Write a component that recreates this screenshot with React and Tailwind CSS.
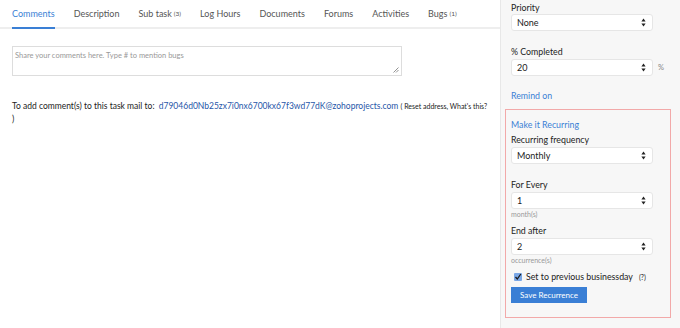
import React from "react";

const tabs = [
  { label: "Comments", active: true },
  { label: "Description" },
  { label: "Sub task", count: "(3)" },
  { label: "Log Hours" },
  { label: "Documents" },
  { label: "Forums" },
  { label: "Activities" },
  { label: "Bugs", count: "(1)" },
];

function Arrows() {
  return (
    <svg width="5" height="9" viewBox="0 0 5 9" className="shrink-0">
      <path d="M2.5 0.5 L4.6 3.5 H0.4 Z" fill="#222" />
      <path d="M2.5 8.5 L4.6 5.5 H0.4 Z" fill="#222" />
    </svg>
  );
}

function Select({ value }) {
  return (
    <div className="flex h-[17px] w-[142px] items-center justify-between rounded-[3px] border border-[#e6e6e6] bg-white pl-[5px] pr-[6px] text-[9px] text-[#222]">
      <span>{value}</span>
      <Arrows />
    </div>
  );
}

export default function App() {
  return (
    <div
      className="flex h-[328px] w-[680px] overflow-hidden bg-white"
      style={{ fontFamily: "Lato, 'Open Sans', sans-serif" }}
    >
      <div className="flex w-[500px] flex-col">
        <div className="flex h-[29px] items-stretch gap-[19px] whitespace-nowrap border-b-2 border-[#eeeeee] pl-[12px]">
          {tabs.map((t) => (
            <div
              key={t.label}
              className={
                "-mb-[2px] flex items-center border-b-2 pt-[1px] text-[9px] " +
                (t.active ? "border-[#3a7fd5] text-[#3a7fd5]" : "border-transparent text-[#555]")
              }
            >
              {t.label}
              {t.count && <span className="ml-[2px] text-[6.5px]">{t.count}</span>}
            </div>
          ))}
        </div>
        <div className="relative ml-[12px] mt-[17px] h-[30px] w-[390px] border border-[#dddddd] px-[2px] pt-[3px] text-[7.5px] text-[#999]">
          Share your comments here. Type # to mention bugs
          <svg width="6" height="6" viewBox="0 0 6 6" className="absolute bottom-[2px] right-[2px]">
            <path d="M0.5 5.5 L5.5 0.5 M3 5.5 L5.5 3" stroke="#777" strokeWidth="0.8" />
          </svg>
        </div>
        <div className="ml-[12px] mt-[24px] w-[476px] text-[8.5px] leading-[13px] text-[#222]">
          To add comment(s) to this task mail to:{" "}
          <span className="ml-[2px] text-[#1f56a8]">d79046d0Nb25zx7i0nx6700kx67f3wd77dK@zohoprojects.com</span>{" "}
          <span className="text-[7px]">( Reset address, What's this?</span>
          <br />)
        </div>
      </div>
      <div className="flex w-[180px] flex-col border-l border-[#e8e8e8] bg-[#f7f7f7] pl-[10px] pt-[2px] text-[8.8px] text-[#222]">
        <div className="leading-[11px]">Priority</div>
        <div className="mt-[1px]">
          <Select value="None" />
        </div>
        <div className="mt-[15px] leading-[11px]">% Completed</div>
        <div className="mt-[2px] flex items-center gap-[5px]">
          <Select value="20" />
          <span className="text-[7.5px] text-[#888]">%</span>
        </div>
        <div className="mt-[13px] text-[#3a7fd5]">Remind on</div>
        <div className="-ml-[6px] mt-[7px] flex h-[209px] w-[166px] flex-col border border-[#f2a9a9] pl-[5px] pt-[9px]">
          <div className="leading-[11px] text-[#3a7fd5]">Make it Recurring</div>
          <div className="mt-[4px] leading-[11px]">Recurring frequency</div>
          <div className="mt-[2px]">
            <Select value="Monthly" />
          </div>
          <div className="mt-[15px] leading-[11px]">For Every</div>
          <div className="mt-[2px]">
            <Select value="1" />
          </div>
          <div className="mt-[1px] text-[7px] leading-[9px] text-[#999]">month(s)</div>
          <div className="mt-[6px] leading-[11px]">End after</div>
          <div className="mt-[2px]">
            <Select value="2" />
          </div>
          <div className="mt-[1px] text-[7px] leading-[9px] text-[#999]">occurrence(s)</div>
          <div className="mt-[5px] flex items-center pl-[3px]">
            <span className="flex h-[8px] w-[8px] items-center justify-center rounded-[1px] bg-[#7aa7e6]">
              <svg width="8" height="8" viewBox="0 0 8 8">
                <path d="M1.5 4 L3.3 6 L6.8 1" stroke="#1a1a1a" strokeWidth="1.3" fill="none" />
              </svg>
            </span>
            <span className="ml-[4px]">Set to previous businessday</span>
            <span className="ml-[6px] text-[7px]">(?)</span>
          </div>
          <div className="mt-[4px] flex h-[16px] w-[76px] items-center justify-center bg-[#3a7fd5] text-[8px] text-white">
            Save Recurrence
          </div>
        </div>
      </div>
    </div>
  );
}
